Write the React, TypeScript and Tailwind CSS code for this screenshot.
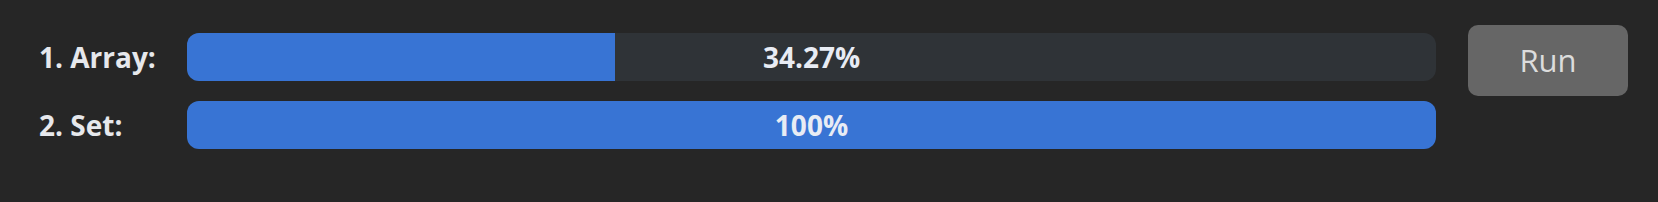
const rows = [
  { label: '1. Array:', pct: 34.27, text: '34.27%' },
  { label: '2. Set:', pct: 100, text: '100%' },
]

export default function App() {
  return (
    <div
      className="flex h-[202px] w-full items-start bg-[#262626] pl-[39px] pt-[25px]"
      style={{ fontFamily: '"Open Sans", "Noto Sans", sans-serif' }}
    >
      <div className="mt-[8px] flex flex-col gap-[20px]">
        {rows.map((r) => (
          <div key={r.label} className="flex items-center">
            <span className="w-[148px] text-[28px] font-bold leading-none text-[#e6e8ec]">{r.label}</span>
            <div className="relative h-[48px] w-[1249px] overflow-hidden rounded-[12px] bg-[#2f3337]">
              <div className="h-full bg-[#3874d4]" style={{ width: `${r.pct}%` }} />
              <span className="absolute inset-0 flex items-center justify-center text-[28px] font-bold text-[#e8ecf4]">
                {r.text}
              </span>
            </div>
          </div>
        ))}
      </div>
      <button className="ml-[32px] h-[71px] w-[160px] rounded-[10px] bg-[#666666] text-[31px] text-[#dcdcdc]">
        Run
      </button>
    </div>
  )
}
